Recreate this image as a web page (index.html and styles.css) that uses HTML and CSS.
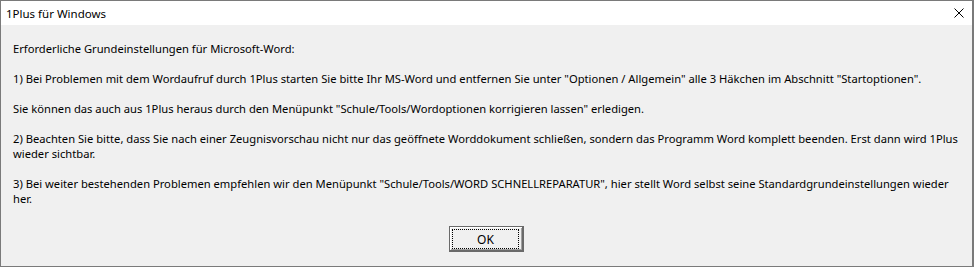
FILE: index.html
```html
<!DOCTYPE html>
<html lang="de">
  <head>
    <meta charset="UTF-8" />
    <meta name="viewport" content="width=device-width, initial-scale=1.0" />
    <title>1Plus für Windows</title>
    <link rel="stylesheet" href="styles.css">
  </head>
  <body>
    <div class="dialog">
      <div class="titlebar">
        <span class="title">1Plus für Windows</span>
        <button class="close" aria-label="Schließen">
          <svg width="10" height="10" viewBox="0 0 10 10">
            <path d="M0.5 0.5 L9.5 9.5 M9.5 0.5 L0.5 9.5" stroke="#000" stroke-width="1" fill="none" />
          </svg>
        </button>
      </div>

      <div class="content">
        <div class="message">
          <p>Erforderliche Grundeinstellungen für Microsoft-Word:</p>
          <p>1) Bei Problemen mit dem Wordaufruf durch 1Plus starten Sie bitte Ihr MS-Word und entfernen Sie unter "Optionen / Allgemein" alle 3 Häkchen im Abschnitt "Startoptionen".</p>
          <p>Sie können das auch aus 1Plus heraus durch den Menüpunkt "Schule/Tools/Wordoptionen korrigieren lassen" erledigen.</p>
          <p>2) Beachten Sie bitte, dass Sie nach einer Zeugnisvorschau nicht nur das geöffnete Worddokument schließen, sondern das Programm Word komplett beenden. Erst dann wird 1Plus<br />wieder sichtbar.</p>
          <p>3) Bei weiter bestehenden Problemen empfehlen wir den Menüpunkt "Schule/Tools/WORD SCHNELLREPARATUR", hier stellt Word selbst seine Standardgrundeinstellungen wieder<br />her.</p>
        </div>

        <div class="actions">
          <button class="ok-button"><span class="focus">OK</span></button>
        </div>
      </div>
    </div>
  </body>
</html>
```

FILE: styles.css
```css
body {
  margin: 0;
  padding: 0;
  background-color: #f0f0f0;
  font-family: "Noto Sans", "Open Sans", sans-serif;
  font-size: 11.2px;
  color: #000;
}

.dialog {
  width: 974px;
  height: 267px;
  box-sizing: border-box;
  border: 1px solid #7a7a7a;
  border-right-width: 2px;
  background-color: #f0f0f0;
  display: flex;
  flex-direction: column;
}

.titlebar {
  height: 24px;
  background-color: white;
  display: flex;
  justify-content: space-between;
  align-items: center;
  padding-left: 5px;
}

.title {
  font-size: 11.5px;
  line-height: 15px;
}

.close {
  width: 27px;
  height: 24px;
  border: none;
  background: none;
  padding: 0;
  display: flex;
  justify-content: center;
  align-items: center;
}

.content {
  padding: 16px 12px 0 12px;
  flex: 1;
}

.message p {
  margin: 0 0 15px 0;
  line-height: 15px;
  white-space: nowrap;
}

.actions {
  display: flex;
  justify-content: center;
  margin-top: 20px;
}

.ok-button {
  width: 75px;
  height: 26px;
  box-sizing: border-box;
  padding: 2px 3px 3px 2px;
  background-color: #f0f0f0;
  border: 1px solid #6a6a6a;
  border-right-width: 2px;
  border-bottom-width: 2px;
  box-shadow: inset 1px 1px #fff, inset -1px -1px #a0a0a0;
  font-family: "Noto Sans", "Open Sans", sans-serif;
  font-size: 12px;
  color: #000;
}

.ok-button .focus {
  display: flex;
  justify-content: center;
  align-items: center;
  height: 100%;
  border: 1px dotted #000;
}
```
